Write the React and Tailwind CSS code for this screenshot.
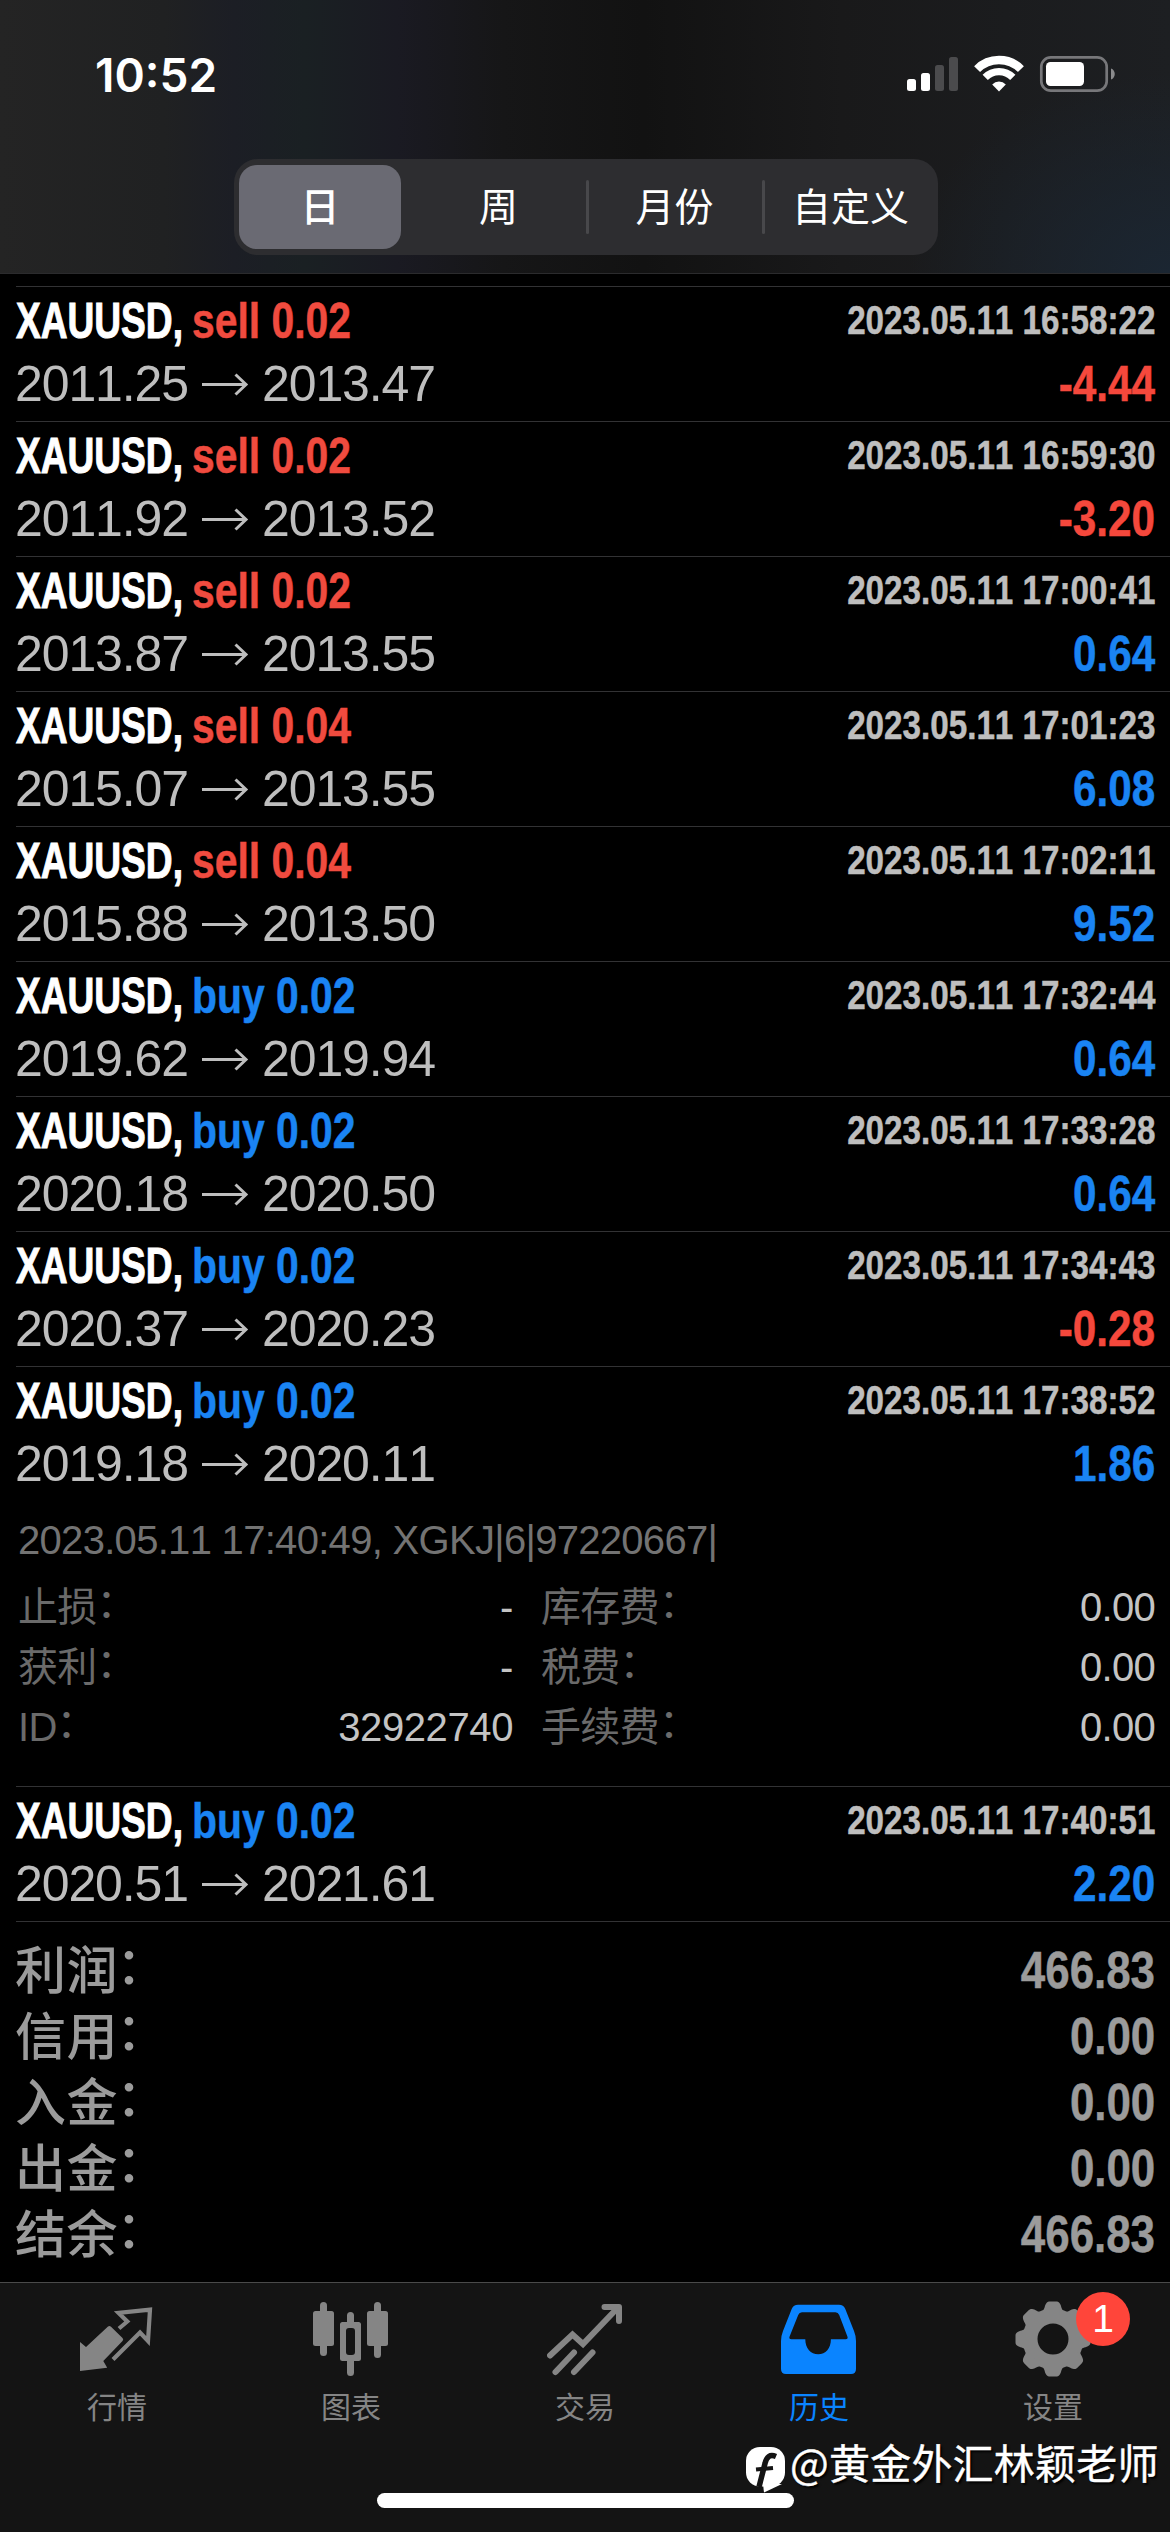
import React from 'react';
import clsx from 'clsx';

const periods = ['周', '月份', '自定义'];

const deals = [
  { side: 'sell', volume: '0.02', open: '2011.25', close: '2013.47', time: '2023.05.11 16:58:22', profit: '-4.44' },
  { side: 'sell', volume: '0.02', open: '2011.92', close: '2013.52', time: '2023.05.11 16:59:30', profit: '-3.20' },
  { side: 'sell', volume: '0.02', open: '2013.87', close: '2013.55', time: '2023.05.11 17:00:41', profit: '0.64' },
  { side: 'sell', volume: '0.04', open: '2015.07', close: '2013.55', time: '2023.05.11 17:01:23', profit: '6.08' },
  { side: 'sell', volume: '0.04', open: '2015.88', close: '2013.50', time: '2023.05.11 17:02:11', profit: '9.52' },
  { side: 'buy', volume: '0.02', open: '2019.62', close: '2019.94', time: '2023.05.11 17:32:44', profit: '0.64' },
  { side: 'buy', volume: '0.02', open: '2020.18', close: '2020.50', time: '2023.05.11 17:33:28', profit: '0.64' },
  { side: 'buy', volume: '0.02', open: '2020.37', close: '2020.23', time: '2023.05.11 17:34:43', profit: '-0.28' },
  {
    side: 'buy', volume: '0.02', open: '2019.18', close: '2020.11', time: '2023.05.11 17:38:52', profit: '1.86',
    comment: '2023.05.11 17:40:49, XGKJ|6|97220667|',
    details: [
      ['止损', '-', '库存费', '0.00'],
      ['获利', '-', '税费', '0.00'],
      ['ID', '32922740', '手续费', '0.00'],
    ],
  },
  { side: 'buy', volume: '0.02', open: '2020.51', close: '2021.61', time: '2023.05.11 17:40:51', profit: '2.20' },
];

const totals = [
  ['利润', '466.83'],
  ['信用', '0.00'],
  ['入金', '0.00'],
  ['出金', '0.00'],
  ['结余', '466.83'],
];

const StatusIcons = () => (
  <svg width="210" height="40" viewBox="0 0 210 40" fill="none">
    <rect x="1" y="25" width="9" height="12" rx="2.5" fill="#fff" />
    <rect x="15" y="19" width="9" height="18" rx="2.5" fill="#fff" />
    <rect x="29" y="11" width="9" height="26" rx="2.5" fill="#4b4b4d" />
    <rect x="43" y="3" width="9" height="34" rx="2.5" fill="#4b4b4d" />
    {/* wifi */}
    <path d="M71.1 15.1a31 31 0 0 1 43.8 0" stroke="#fff" strokeWidth="8.4" />
    <path d="M79.2 23.4a19.4 19.4 0 0 1 27.6 0" stroke="#fff" strokeWidth="7.4" />
    <path d="M86.2 30.4a9.6 9.6 0 0 1 13.6 0L93 37.4z" fill="#fff" />
    {/* battery */}
    <rect x="135.3" y="3.3" width="65.4" height="33.4" rx="9.5" stroke="#77777a" strokeWidth="2.7" />
    <rect x="140" y="8" width="38" height="24" rx="4.5" fill="#fff" />
    <path d="M205 14.5c5 1.5 5 9.5 0 11z" fill="#8a8a8c" />
  </svg>
);

const QuotesIcon = () => (
  <svg width="76" height="76" viewBox="0 0 76 76" fill="none">
    <path
      d="M1 41l6 5 22-20.5q1.5-1.3 3 .2L43.5 37q1.5 1.5 0 3L24.3 60l3.9 6.8L1 70z"
      fill="currentColor"
    />
    <path d="M40 27.5l8.3-7-8.8-8.6L71 8.6 69 40l-8-8.5-27 27" stroke="currentColor" strokeWidth="4.2" />
  </svg>
);

const ChartIcon = () => (
  <svg width="76" height="76" viewBox="0 0 76 76" fill="currentColor">
    <rect x="0" y="10" width="21" height="35" rx="2.5" />
    <rect x="7" y="1" width="7" height="54" rx="3.5" />
    <rect x="54" y="10" width="21" height="35" rx="2.5" />
    <rect x="61" y="1" width="7" height="56" rx="3.5" />
    <path
      fillRule="evenodd"
      d="M34 21v-6.5a3.5 3.5 0 0 1 7 0V21h4.5q2.5 0 2.5 2.5v34q0 2.5-2.5 2.5H41v11.5a3.5 3.5 0 0 1-7 0V60h-4.5q-2.5 0-2.5-2.5v-34q0-2.5 2.5-2.5zm2 6q-3 0-3 3v21q0 3 3 3h3q3 0 3-3V30q0-3-3-3z"
    />
  </svg>
);

const TradeIcon = () => (
  <svg width="76" height="76" viewBox="0 0 76 76" fill="none" stroke="currentColor" strokeWidth="6" strokeLinecap="round">
    <path d="M3 54.5L25.5 33.5 36 43 71 6.5" strokeLinejoin="miter" />
    <path d="M57.5 6H72v14" strokeLinejoin="round" />
    <path d="M8.5 71L27 51.5M27 71l18.5-19.5" />
  </svg>
);

const HistoryIcon = () => (
  <svg width="76" height="76" viewBox="0 0 76 76" fill="currentColor">
    <path
      fillRule="evenodd"
      d="M17 3.7h41q4.5 0 6.2 4L73 30q2 5 2 10v28q0 5-5 5H5q-5 0-5-5V40q0-5 2-10l8.8-22.3q1.7-4 6.2-4zm4 7.5q-2.8 0-3.8 2.8L8.6 35.5q-1 2.8 1.8 2.8H24.3c0 9 5.5 15 12.9 15s12.7-6 12.7-15H64.6q2.8 0 1.8-2.8L58.2 14q-1-2.8-3.8-2.8z"
    />
  </svg>
);

const GearIcon = () => (
  <svg width="76" height="76" viewBox="0 0 76 76" fill="currentColor">
    <circle cx="38" cy="38" r="23" fill="none" stroke="currentColor" strokeWidth="15" />
    {[0, 45, 90, 135, 180, 225, 270, 315].map((angle) => (
      <path
        key={angle}
        transform={`rotate(${angle} 38 38)`}
        d="M26 11C30.5 8.5 29 5 31.5 2 32.5.7 33.5.5 35 .5h6c1.5 0 2.5.2 3.5 1.5C47 5 45.5 8.5 50 11z"
      />
    ))}
  </svg>
);

const tabs = [
  { label: '行情', Icon: QuotesIcon },
  { label: '图表', Icon: ChartIcon },
  { label: '交易', Icon: TradeIcon },
  { label: '历史', Icon: HistoryIcon, active: true },
  { label: '设置', Icon: GearIcon, badge: '1' },
];

const Header = () => (
  <header className="flex h-[274px] flex-col border-b border-[#2b2b2d] bg-[radial-gradient(ellipse_260px_200px_at_100%_100%,#1b2632_0%,transparent_100%),linear-gradient(90deg,#242424_0%,#202122_14%,#1c1e25_20%,#1a2023_26%,#1a1a22_34%,#161617_43%,#121212_55%,#19191a_72%,#1d1f22_100%)]">
    <div className="flex h-[159px] items-start justify-between pl-[95px] pr-[54px]">
      <span className="pt-[47px] font-['Inter',sans-serif] text-[46px] font-semibold leading-[56px]">10:52</span>
      <div className="pt-[54px]">
        <StatusIcons />
      </div>
    </div>
    <div className="ml-[234px] grid h-24 w-[704px] grid-cols-4 rounded-[24px] bg-[#2d2d30] text-[39px]">
      <div className="my-[6px] ml-[5px] mr-[9px] flex items-center justify-center rounded-[18px] bg-[#6a6a73] pt-[2px] font-medium">
        日
      </div>
      {periods.map((period, i) => (
        <div key={period} className="flex items-center">
          <div className={clsx('h-[54px] w-[3px] rounded-full', i > 0 && 'bg-[#48484b]')} />
          <span className="flex-1 pr-[2px] pt-[2px] text-center">{period}</span>
        </div>
      ))}
    </div>
  </header>
);

const DealRow = ({ deal }) => (
  <div className="border-t border-[#323234] pt-[2px]">
    <div className="flex h-[63px] justify-between whitespace-nowrap pr-[15px] leading-[63px]">
      <div className="flex text-[50px] font-bold leading-[65px]">
        <span className="w-[175.5px] origin-left scale-x-[0.742] [-webkit-text-stroke:1px_white]">XAUUSD,</span>
        <span
          className={clsx(
            'origin-left scale-x-[0.817] [-webkit-text-stroke:0.5px_currentColor]',
            deal.side === 'sell' ? 'text-[#f04b3f]' : 'text-[#1a84f3]'
          )}
        >
          {deal.side} {deal.volume}
        </span>
      </div>
      <span className="origin-right scale-x-[0.83] text-[40px] font-bold text-[#bebebe] [-webkit-text-stroke:0.5px_currentColor]">
        {deal.time}
      </span>
    </div>
    <div className="flex h-[69px] justify-between pr-[15px] text-[50px] leading-[65px]">
      <div className="-ml-px flex tracking-[-1.1px] text-[#bebebe]">
        <span className="w-[186px]">{deal.open}</span>
        <svg width="48" height="65" viewBox="0 0 48 65" fill="none" stroke="currentColor" strokeWidth="3">
          <path d="M1 32.5h44M34.5 22.5l10.5 10-10.5 10" />
        </svg>
        <span className="pl-[13px]">{deal.close}</span>
      </div>
      <span
        className={clsx(
          'origin-right scale-x-[0.845] font-bold [-webkit-text-stroke:0.5px_currentColor]',
          deal.profit.startsWith('-') ? 'text-[#f5483c]' : 'text-[#1a84f3]'
        )}
      >
        {deal.profit}
      </span>
    </div>
    {deal.comment && (
      <div className="pb-[29px] pl-[2px] pt-[9px] text-[40px] leading-[60px] tracking-[-0.7px] text-[#737373]">
        <p className="mb-[7px]">{deal.comment}</p>
        {deal.details.map(([leftLabel, leftValue, rightLabel, rightValue]) => (
          <div key={leftLabel} className="flex h-[60px] pr-[15px]">
            <span className="flex-1 text-[#6a6a6a]">
              {leftLabel}
              <span className="relative -top-[4px]">：</span>
            </span>
            <span className="tracking-[-0.4px] text-[#c4c4c4]">{leftValue}</span>
            <div className="flex w-[642px] justify-between pl-[28px]">
              <span className="text-[#6a6a6a]">
                {rightLabel}
                <span className="relative -top-[4px]">：</span>
              </span>
              <span className="text-[#c4c4c4]">{rightValue}</span>
            </div>
          </div>
        ))}
      </div>
    )}
  </div>
);

const TabBar = () => (
  <nav className="relative h-[250px] border-t border-[#4a4a4a] bg-[#141414]">
    <div className="grid grid-cols-5 pt-[18px]">
      {tabs.map(({ label, Icon, active, badge }) => (
        <div
          key={label}
          className={clsx('flex flex-col items-center', active ? 'text-[#0a84ff]' : 'text-[#858585]')}
        >
          <div className="relative">
            <Icon />
            {badge && (
              <span className="absolute -top-[9px] left-[61px] flex size-[54px] items-center justify-center rounded-full bg-[#ff453a] text-[39px] text-white">
                {badge}
              </span>
            )}
          </div>
          <span className="mt-[11px] text-[30px] leading-[40px]">{label}</span>
        </div>
      ))}
    </div>
    <div className="absolute left-[377px] top-[210px] h-[15px] w-[417px] rounded-full bg-white" />
    <div className="absolute left-[745px] top-[153px] flex whitespace-nowrap">
      <svg width="42" height="54" viewBox="0 0 42 54" fill="none" className="mt-[11px]">
        <path d="M18 37h19L19 45.5z" fill="#fff" />
        <rect x="1" y="0" width="39" height="39.5" rx="14" fill="#fff" />
        <path d="M31 9.5c-6-2.5-9.5 0-11 7L14 40" stroke="#141414" strokeWidth="5.5" />
        <path d="M11 22.5l17-1.5" stroke="#141414" strokeWidth="4" />
      </svg>
      <span className="pl-[3px] font-['Noto_Sans_CJK_SC',sans-serif] text-[41px] leading-[50px] tracking-[0.2px] text-white [-webkit-text-stroke:0.4px_white] [text-shadow:2px_2px_2px_#000]">
        @黄金外汇林颖老师
      </span>
    </div>
  </nav>
);

export default function App() {
  return (
    <div className="flex h-[2532px] w-[1170px] flex-col overflow-hidden bg-black font-['Liberation_Sans','Noto_Sans_CJK_SC',sans-serif] text-white [font-kerning:none]">
      <Header />
      <main className="flex-1 pl-4 pt-3">
        {deals.map((deal) => (
          <DealRow key={deal.time} deal={deal} />
        ))}
        <div className="border-t border-[#323234] pr-[15px] pt-4 text-[51px] leading-[66px] text-[#9b9b9b]">
          {totals.map(([label, value]) => (
            <div key={label} className="flex h-[66px] justify-between">
              <span className="-ml-px pt-px font-medium tracking-[0.6px]">
                {label}
                <span className="relative -left-[2px] -top-[5px]">：</span>
              </span>
              <span className="origin-right scale-x-[0.86] font-bold [-webkit-text-stroke:0.5px_currentColor]">{value}</span>
            </div>
          ))}
        </div>
      </main>
      <TabBar />
    </div>
  );
}
